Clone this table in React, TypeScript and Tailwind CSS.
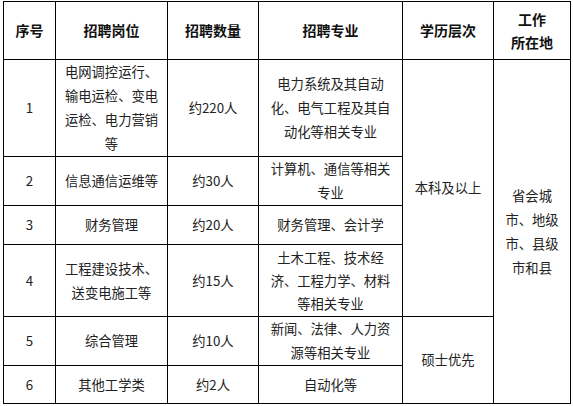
const font = { fontFamily: '"Noto Sans CJK SC", "Noto Sans", sans-serif' };

type Cell = { lines: string[]; rowSpan?: number; tight?: boolean };

const th = "border border-black font-bold text-[14px] leading-[23px] text-[#111] text-center align-middle p-0";
const td = "border border-black text-[13.3px] text-[#222] text-center align-middle p-0";

function Lines({ lines }: { lines: string[] }) {
  return (
    <>
      {lines.map((l, i) => (
        <div key={i} className="whitespace-nowrap">
          {l}
        </div>
      ))}
    </>
  );
}

const rows: { h: string; cells: Cell[] }[] = [
  {
    h: "h-[97px]",
    cells: [
      { lines: ["1"] },
      { lines: ["电网调控运行、", "输电运检、变电", "运检、电力营销", "等"] },
      { lines: ["约220人"] },
      { lines: ["电力系统及其自动", "化、电气工程及其自", "动化等相关专业"] },
      { lines: ["本科及以上"], rowSpan: 4 },
      { lines: ["省会城", "市、地级", "市、县级", "市和县"], rowSpan: 6 },
    ],
  },
  {
    h: "h-[49px]",
    cells: [
      { lines: ["2"] },
      { lines: ["信息通信运维等"] },
      { lines: ["约30人"] },
      { lines: ["计算机、通信等相关", "专业"] },
    ],
  },
  {
    h: "h-[39px]",
    cells: [
      { lines: ["3"] },
      { lines: ["财务管理"] },
      { lines: ["约20人"] },
      { lines: ["财务管理、会计学"] },
    ],
  },
  {
    h: "h-[72px]",
    cells: [
      { lines: ["4"] },
      { lines: ["工程建设技术、", "送变电施工等"] },
      { lines: ["约15人"] },
      { lines: ["土木工程、技术经", "济、工程力学、材料", "等相关专业"], tight: true },
    ],
  },
  {
    h: "h-[49px]",
    cells: [
      { lines: ["5"] },
      { lines: ["综合管理"] },
      { lines: ["约10人"] },
      { lines: ["新闻、法律、人力资", "源等相关专业"] },
      { lines: ["硕士优先"], rowSpan: 2 },
    ],
  },
  {
    h: "h-[38px]",
    cells: [
      { lines: ["6"] },
      { lines: ["其他工学类"] },
      { lines: ["约2人"] },
      { lines: ["自动化等"] },
    ],
  },
];

export default function App() {
  return (
    <div className="w-[573px] h-[406px] bg-white pt-[1px] pl-[3px]" style={font}>
      <table className="border-collapse table-fixed w-[567px]">
        <colgroup>
          <col className="w-[52px]" />
          <col className="w-[112px]" />
          <col className="w-[91px]" />
          <col className="w-[144px]" />
          <col className="w-[91px]" />
          <col className="w-[77px]" />
        </colgroup>
        <thead>
          <tr className="h-[58px]">
            <th className={th}>序号</th>
            <th className={th}>招聘岗位</th>
            <th className={th}>招聘数量</th>
            <th className={th}>招聘专业</th>
            <th className={th}>学历层次</th>
            <th className={th}>
              <div>工作</div>
              <div>所在地</div>
            </th>
          </tr>
        </thead>
        <tbody>
          {rows.map((r, i) => (
            <tr key={i} className={r.h}>
              {r.cells.map((c, j) => (
                <td
                  key={j}
                  rowSpan={c.rowSpan}
                  className={td + (c.tight ? " leading-[23px]" : " leading-[24px]")}
                >
                  <Lines lines={c.lines} />
                </td>
              ))}
            </tr>
          ))}
        </tbody>
      </table>
    </div>
  );
}
